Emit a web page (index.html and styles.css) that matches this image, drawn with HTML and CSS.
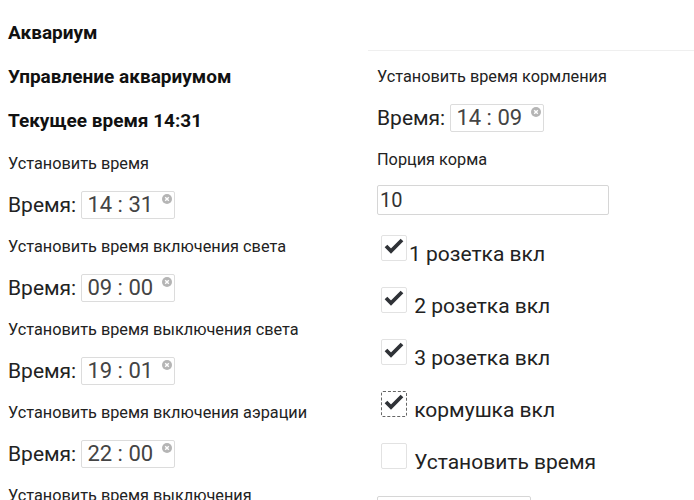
FILE: index.html
```html
<!DOCTYPE html>
<html lang="ru">
<head>
<meta charset="UTF-8" />
<meta name="viewport" content="width=device-width, initial-scale=1" />
<title>Аквариум</title>
<link rel="stylesheet" href="styles.css">
</head>
<body>
  <div class="page">
    <section class="col col-left">
      <h1 class="title">Аквариум</h1>
      <h2 class="title">Управление аквариумом</h2>
      <h3 class="title">Текущее время 14:31</h3>

      <p class="label">Установить время</p>
      <div class="time-row">Время: <span class="time-input">14 : 31<svg class="clear" viewBox="0 0 10 10" width="10" height="10"><circle cx="5" cy="5" r="5" fill="#b5b5b5"/><path d="M3.2 3.2 L6.8 6.8 M6.8 3.2 L3.2 6.8" stroke="#fff" stroke-width="1.4"/></svg></span></div>

      <p class="label">Установить время включения света</p>
      <div class="time-row">Время: <span class="time-input">09 : 00<svg class="clear" viewBox="0 0 10 10" width="10" height="10"><circle cx="5" cy="5" r="5" fill="#b5b5b5"/><path d="M3.2 3.2 L6.8 6.8 M6.8 3.2 L3.2 6.8" stroke="#fff" stroke-width="1.4"/></svg></span></div>

      <p class="label">Установить время выключения света</p>
      <div class="time-row">Время: <span class="time-input">19 : 01<svg class="clear" viewBox="0 0 10 10" width="10" height="10"><circle cx="5" cy="5" r="5" fill="#b5b5b5"/><path d="M3.2 3.2 L6.8 6.8 M6.8 3.2 L3.2 6.8" stroke="#fff" stroke-width="1.4"/></svg></span></div>

      <p class="label">Установить время включения аэрации</p>
      <div class="time-row">Время: <span class="time-input">22 : 00<svg class="clear" viewBox="0 0 10 10" width="10" height="10"><circle cx="5" cy="5" r="5" fill="#b5b5b5"/><path d="M3.2 3.2 L6.8 6.8 M6.8 3.2 L3.2 6.8" stroke="#fff" stroke-width="1.4"/></svg></span></div>

      <p class="label">Установить время выключения</p>
    </section>

    <section class="col col-right">
      <div class="panel">
        <p class="label">Установить время кормления</p>
        <div class="time-row">Время: <span class="time-input">14 : 09<svg class="clear" viewBox="0 0 10 10" width="10" height="10"><circle cx="5" cy="5" r="5" fill="#b5b5b5"/><path d="M3.2 3.2 L6.8 6.8 M6.8 3.2 L3.2 6.8" stroke="#fff" stroke-width="1.4"/></svg></span></div>

        <p class="label">Порция корма</p>
        <div class="text-input">10</div>

        <div class="checks">
          <div class="check-row"><span class="checkbox"><svg viewBox="0 0 26 26" width="26" height="26"><path d="M5 11 L10 16 L21 5" fill="none" stroke="#2f3237" stroke-width="3.8"/></svg></span>1 розетка вкл</div>
          <div class="check-row"><span class="checkbox"><svg viewBox="0 0 26 26" width="26" height="26"><path d="M5 11 L10 16 L21 5" fill="none" stroke="#2f3237" stroke-width="3.8"/></svg></span> 2 розетка вкл</div>
          <div class="check-row"><span class="checkbox"><svg viewBox="0 0 26 26" width="26" height="26"><path d="M5 11 L10 16 L21 5" fill="none" stroke="#2f3237" stroke-width="3.8"/></svg></span> 3 розетка вкл</div>
          <div class="check-row"><span class="checkbox focused"><svg viewBox="0 0 26 26" width="26" height="26"><path d="M5 11 L10 16 L21 5" fill="none" stroke="#2f3237" stroke-width="3.8"/></svg></span> кормушка вкл</div>
          <div class="check-row"><span class="checkbox"></span> Установить время</div>
        </div>

        <div class="text-input short"></div>
      </div>
    </section>
  </div>
</body>
</html>
```

FILE: styles.css
```css
* {
  box-sizing: border-box;
}
body {
  margin: 0;
  font-family: Roboto, 'Noto Sans', sans-serif;
  color: #222;
  background: #fff;
  overflow: hidden;
}
.page {
  display: grid;
  grid-template-columns: 368px 1fr;
  height: 500px;
  overflow: hidden;
}
.col {
  overflow: hidden;
}
.col-left {
  padding: 11px 0 0 8px;
}
.col-right {
  padding-top: 50px;
}
.panel {
  border-top: 1px solid #efefef;
  padding: 5px 0 0 9px;
}

/* Headings */
.title {
  margin: 0;
  height: 44px;
  line-height: 44px;
  font-size: 19px;
  font-weight: 700;
  color: #111;
  white-space: nowrap;
}

/* Labels and time rows */
.label {
  margin: 0;
  height: 41px;
  line-height: 41px;
  font-size: 16.3px;
  white-space: nowrap;
}
.time-row {
  height: 42px;
  line-height: 42px;
  font-size: 21px;
  white-space: nowrap;
}
.time-input {
  display: inline-block;
  width: 94px;
  height: 28px;
  line-height: 26px;
  padding-left: 5px;
  border: 1px solid #dcdcdc;
  border-radius: 2px;
  font-size: 22px;
  color: #444;
}
.clear {
  vertical-align: 8px;
  margin-left: 9px;
}

/* Text input */
.text-input {
  margin-top: 5px;
  width: 232px;
  height: 30px;
  line-height: 28px;
  padding-left: 2px;
  border: 1px solid #d6d6d6;
  border-radius: 2px;
  font-size: 20px;
  color: #333;
}
.text-input.short {
  margin-top: 10px;
  width: 154px;
}

/* Checkboxes */
.checks {
  margin-top: 11px;
}
.check-row {
  height: 52px;
  padding: 9px 0 0 4px;
  font-size: 21px;
  line-height: 26px;
  white-space: nowrap;
}
.checkbox {
  display: inline-block;
  overflow: hidden;
  width: 26px;
  height: 26px;
  border: 1px solid #e2e2e2;
  border-radius: 2px;
  margin-right: 2px;
}
.checkbox svg {
  display: block;
  margin: -1px;
}
.checkbox.focused {
  border: 1px dashed #666;
}
```
